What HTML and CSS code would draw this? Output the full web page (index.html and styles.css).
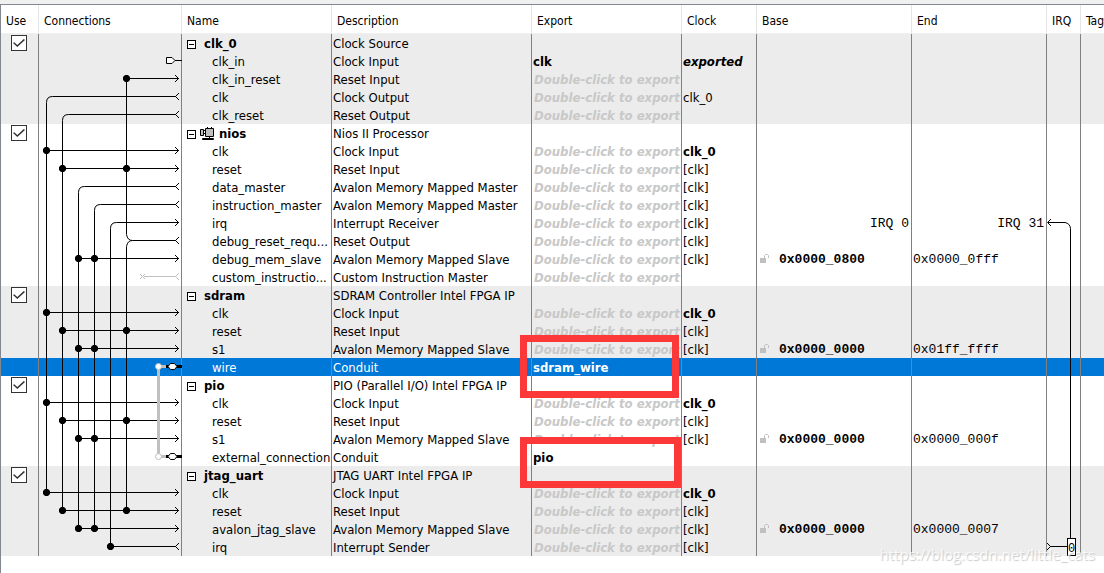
FILE: index.html
```html
<!DOCTYPE html>
<html lang="en">
<head>
<meta charset="utf-8">
<title>System Contents</title>
<link rel="stylesheet" href="styles.css">
</head>
<body>
<svg class="defs" aria-hidden="true">
  <defs>
    <path id="in" d="M-4 -3.500l3.500 3.500l-3.500 3.500" />
    <path id="out" d="M0 -3.500l-3.500 3.500l3.500 3.500" />
    <path id="dot" d="M-1.500 -3.500h3l2 2v3l-2 2h-3l-2 -2v-3z" />
    <path id="hex" d="M-4.500 0l2.500 -3h4l2.500 3l-2.500 3h-4z" />
    <symbol id="lock" viewBox="0 0 9 9"><path d="M0 4h6v5h-6z" fill="#c0c0c0"/><path d="M4.500 4v-2.500l1 -1h2l1 1v2.500" fill="none" stroke="#c0c0c0"/></symbol>
  </defs>
</svg>
<main class="panel">
<table class="grid">
<colgroup><col class="c-use"><col class="c-conn"><col class="c-name"><col class="c-desc"><col class="c-exp"><col class="c-clk"><col class="c-base"><col class="c-end"><col class="c-irq"><col></colgroup>
<thead><tr><th>Use</th><th>Connections</th><th>Name</th><th>Description</th><th>Export</th><th>Clock</th><th>Base</th><th>End</th><th>IRQ</th><th>Tags</th></tr></thead>
<tbody class="shade">
<tr><td><input type="checkbox" class="use" aria-label="Use clk_0" checked></td><td></td><td><div class="mod"><button class="fold" aria-label="Collapse clk_0"></button><b>clk_0</b></div></td><td>Clock Source</td><td></td><td></td><td></td><td></td><td></td><td></td></tr>
<tr><td></td><td></td><td class="port">clk_in</td><td>Clock Input</td><td><b>clk</b></td><td><b><i>exported</i></b></td><td></td><td></td><td></td><td></td></tr>
<tr><td></td><td></td><td class="port">clk_in_reset</td><td>Reset Input</td><td class="hint">Double-click to export</td><td></td><td></td><td></td><td></td><td></td></tr>
<tr><td></td><td></td><td class="port">clk</td><td>Clock Output</td><td class="hint">Double-click to export</td><td>clk_0</td><td></td><td></td><td></td><td></td></tr>
<tr><td></td><td></td><td class="port">clk_reset</td><td>Reset Output</td><td class="hint">Double-click to export</td><td></td><td></td><td></td><td></td><td></td></tr>
</tbody>
<tbody>
<tr><td><input type="checkbox" class="use" aria-label="Use nios" checked></td><td></td><td><div class="mod"><button class="fold" aria-label="Collapse nios"></button><svg class="cpu" viewBox="0 0 15 14" aria-hidden="true"><path d="M.5 2.500h3v6h-3zM5.500 1.500h8v8h-8z" fill="#c0c0c0" stroke="#000"/><path d="M4 3.500h2M4 6.500h2M7.500 0v2M11.500 0v2M9.500 10v2" fill="none" stroke="#000"/><path d="M2.500 11.500h11v1h-11z" fill="#c0c0c0" stroke="#000"/></svg><b>nios</b></div></td><td>Nios II Processor</td><td></td><td></td><td></td><td></td><td></td><td></td></tr>
<tr><td></td><td></td><td class="port">clk</td><td>Clock Input</td><td class="hint">Double-click to export</td><td><b>clk_0</b></td><td></td><td></td><td></td><td></td></tr>
<tr><td></td><td></td><td class="port">reset</td><td>Reset Input</td><td class="hint">Double-click to export</td><td>[clk]</td><td></td><td></td><td></td><td></td></tr>
<tr><td></td><td></td><td class="port">data_master</td><td>Avalon Memory Mapped Master</td><td class="hint">Double-click to export</td><td>[clk]</td><td></td><td></td><td></td><td></td></tr>
<tr><td></td><td></td><td class="port">instruction_master</td><td>Avalon Memory Mapped Master</td><td class="hint">Double-click to export</td><td>[clk]</td><td></td><td></td><td></td><td></td></tr>
<tr><td></td><td></td><td class="port">irq</td><td>Interrupt Receiver</td><td class="hint">Double-click to export</td><td>[clk]</td><td class="mono right">IRQ 0</td><td class="mono right">IRQ 31</td><td></td><td></td></tr>
<tr><td></td><td></td><td class="port">debug_reset_requ...</td><td>Reset Output</td><td class="hint">Double-click to export</td><td>[clk]</td><td></td><td></td><td></td><td></td></tr>
<tr><td></td><td></td><td class="port">debug_mem_slave</td><td>Avalon Memory Mapped Slave</td><td class="hint">Double-click to export</td><td>[clk]</td><td class="mono"><div class="base"><svg class="lock"><use href="#lock"/></svg><b>0x0000_0800</b></div></td><td class="mono">0x0000_0fff</td><td></td><td></td></tr>
<tr><td></td><td></td><td class="port">custom_instructio...</td><td>Custom Instruction Master</td><td class="hint">Double-click to export</td><td></td><td></td><td></td><td></td><td></td></tr>
</tbody>
<tbody class="shade">
<tr><td><input type="checkbox" class="use" aria-label="Use sdram" checked></td><td></td><td><div class="mod"><button class="fold" aria-label="Collapse sdram"></button><b>sdram</b></div></td><td>SDRAM Controller Intel FPGA IP</td><td></td><td></td><td></td><td></td><td></td><td></td></tr>
<tr><td></td><td></td><td class="port">clk</td><td>Clock Input</td><td class="hint">Double-click to export</td><td><b>clk_0</b></td><td></td><td></td><td></td><td></td></tr>
<tr><td></td><td></td><td class="port">reset</td><td>Reset Input</td><td class="hint">Double-click to export</td><td>[clk]</td><td></td><td></td><td></td><td></td></tr>
<tr><td></td><td></td><td class="port">s1</td><td>Avalon Memory Mapped Slave</td><td class="hint">Double-click to export</td><td>[clk]</td><td class="mono"><div class="base"><svg class="lock"><use href="#lock"/></svg><b>0x0000_0000</b></div></td><td class="mono">0x01ff_ffff</td><td></td><td></td></tr>
<tr class="selected"><td></td><td></td><td class="port">wire</td><td>Conduit</td><td><b>sdram_wire</b></td><td></td><td></td><td></td><td></td><td></td></tr>
</tbody>
<tbody>
<tr><td><input type="checkbox" class="use" aria-label="Use pio" checked></td><td></td><td><div class="mod"><button class="fold" aria-label="Collapse pio"></button><b>pio</b></div></td><td>PIO (Parallel I/O) Intel FPGA IP</td><td></td><td></td><td></td><td></td><td></td><td></td></tr>
<tr><td></td><td></td><td class="port">clk</td><td>Clock Input</td><td class="hint">Double-click to export</td><td><b>clk_0</b></td><td></td><td></td><td></td><td></td></tr>
<tr><td></td><td></td><td class="port">reset</td><td>Reset Input</td><td class="hint">Double-click to export</td><td>[clk]</td><td></td><td></td><td></td><td></td></tr>
<tr><td></td><td></td><td class="port">s1</td><td>Avalon Memory Mapped Slave</td><td class="hint">Double-click to export</td><td>[clk]</td><td class="mono"><div class="base"><svg class="lock"><use href="#lock"/></svg><b>0x0000_0000</b></div></td><td class="mono">0x0000_000f</td><td></td><td></td></tr>
<tr><td></td><td></td><td class="port">external_connection</td><td>Conduit</td><td><b>pio</b></td><td></td><td></td><td></td><td></td><td></td></tr>
</tbody>
<tbody class="shade">
<tr><td><input type="checkbox" class="use" aria-label="Use jtag_uart" checked></td><td></td><td><div class="mod"><button class="fold" aria-label="Collapse jtag_uart"></button><b>jtag_uart</b></div></td><td>JTAG UART Intel FPGA IP</td><td></td><td></td><td></td><td></td><td></td><td></td></tr>
<tr><td></td><td></td><td class="port">clk</td><td>Clock Input</td><td class="hint">Double-click to export</td><td><b>clk_0</b></td><td></td><td></td><td></td><td></td></tr>
<tr><td></td><td></td><td class="port">reset</td><td>Reset Input</td><td class="hint">Double-click to export</td><td>[clk]</td><td></td><td></td><td></td><td></td></tr>
<tr><td></td><td></td><td class="port">avalon_jtag_slave</td><td>Avalon Memory Mapped Slave</td><td class="hint">Double-click to export</td><td>[clk]</td><td class="mono"><div class="base"><svg class="lock"><use href="#lock"/></svg><b>0x0000_0000</b></div></td><td class="mono">0x0000_0007</td><td></td><td></td></tr>
<tr><td></td><td></td><td class="port">irq</td><td>Interrupt Sender</td><td class="hint">Double-click to export</td><td>[clk]</td><td></td><td></td><td></td><td></td></tr>
</tbody>
</table>

<svg class="wires" viewBox="38 34 146 522" aria-hidden="true">
  <g class="line">
    <path d="M176 96.500H52.500q-6 0 -6 6V492.500H179"/>
    <path d="M176 114.500H68.500q-6 0 -6 6V510.500H179"/>
    <path d="M176 186.500H84.500q-6 0 -6 6V528.500H179"/>
    <path d="M176 204.500H100.500q-6 0 -6 6V528.500"/>
    <path d="M179 222.500H116.500q-6 0 -6 6V546.500H176"/>
    <path d="M179 78.500H126.500V234.500q1 6 6 6H176M132.500 240.500q-5 0 -6 6V510.500"/>
    <path d="M46.500 150.500H179M62.500 168.500H179M78.500 258.500H179"/>
    <path d="M46.500 312.500H179M62.500 330.500H179M78.500 348.500H179"/>
    <path d="M46.500 402.500H179M62.500 420.500H179M78.500 438.500H179"/>
    <path d="M166.500 57.500h5.500l3 3l-3 3h-5.500zM175 60.500h7" class="open"/>
    <use href="#in" x="179" y="78.500"/><use href="#in" x="179" y="150.500"/><use href="#in" x="179" y="168.500"/>
    <use href="#in" x="179" y="222.500"/><use href="#in" x="179" y="258.500"/><use href="#in" x="179" y="312.500"/>
    <use href="#in" x="179" y="330.500"/><use href="#in" x="179" y="348.500"/><use href="#in" x="179" y="402.500"/>
    <use href="#in" x="179" y="420.500"/><use href="#in" x="179" y="438.500"/><use href="#in" x="179" y="492.500"/>
    <use href="#in" x="179" y="510.500"/><use href="#in" x="179" y="528.500"/>
    <use href="#out" x="179" y="96.500"/><use href="#out" x="179" y="114.500"/><use href="#out" x="179" y="186.500"/>
    <use href="#out" x="179" y="204.500"/><use href="#out" x="179" y="240.500"/><use href="#out" x="179" y="546.500"/>
  </g>
  <g class="dots">
    <use href="#dot" x="126.500" y="78.500"/><use href="#dot" x="46.500" y="150.500"/>
    <use href="#dot" x="62.500" y="168.500"/><use href="#dot" x="126.500" y="168.500"/>
    <use href="#dot" x="78.500" y="258.500"/><use href="#dot" x="94.500" y="258.500"/>
    <use href="#dot" x="46.500" y="312.500"/><use href="#dot" x="62.500" y="330.500"/><use href="#dot" x="126.500" y="330.500"/>
    <use href="#dot" x="78.500" y="348.500"/><use href="#dot" x="94.500" y="348.500"/>
    <use href="#dot" x="46.500" y="402.500"/><use href="#dot" x="62.500" y="420.500"/><use href="#dot" x="126.500" y="420.500"/>
    <use href="#dot" x="78.500" y="438.500"/><use href="#dot" x="94.500" y="438.500"/>
    <use href="#dot" x="46.500" y="492.500"/><use href="#dot" x="62.500" y="510.500"/><use href="#dot" x="126.500" y="510.500"/>
    <use href="#dot" x="78.500" y="528.500"/><use href="#dot" x="94.500" y="528.500"/><use href="#dot" x="110.500" y="546.500"/>
  </g>
  <g class="faint">
    <path d="M140 274l5 5M145 274l-5 5M144 276.500H176"/>
    <use href="#out" x="179" y="276.500"/>
    <path d="M166 366.500H158.500V456.500H166" class="thick"/>
    <circle cx="158.500" cy="366.500" r="3" class="joint"/>
    <circle cx="158.500" cy="456.500" r="3" class="joint"/>
  </g>
  <g class="conduit">
    <path d="M166 366.500H182M166 456.500H182"/>
    <use href="#hex" x="172.500" y="366.500"/><use href="#hex" x="172.500" y="456.500"/>
  </g>
</svg>

<svg class="irq-wire" viewBox="1046 34 34 522" aria-hidden="true">
  <g class="line">
    <path d="M1048 222.500H1065q5 1 5.500 6V538M1050 546.500H1067"/>
    <path d="M1051 219l-3.500 3.500l3.500 3.500M1047 543l3.500 3.500l-3.500 3.500"/>
    <rect x="1067.500" y="538.500" width="8" height="17" fill="#fff"/>
  </g>
  <text x="1071.500" y="552" class="irq-num">0</text>
</svg>
<div class="mark mark-wire"></div>
<div class="mark mark-pio"></div>
<div class="watermark">https://blog.csdn.net/little_cats</div>
</main>
</body>
</html>
```

FILE: styles.css
```css
* { box-sizing: border-box; }
body {
  margin: 0;
  padding-top: 4px;
  background: #f0f0f0;
  color: #000;
  font: 13px/16px "DejaVu Sans Condensed", "DejaVu Sans", sans-serif;
}
.defs { position: absolute; width: 0; height: 0; }
.panel {
  position: relative;
  min-height: calc(100vh - 4px);
  overflow: hidden;
  border-top: 1px solid #828790;
  border-left: 1px solid #828790;
  background: #fff;
}
.grid { width: 100%; table-layout: fixed; border-collapse: separate; border-spacing: 0; }
.c-use { width: 37px; }
.c-conn { width: 143px; }
.c-name, .c-exp { width: 150px; }
.c-desc { width: 200px; }
.c-clk { width: 75px; }
.c-base { width: 155px; }
.c-end { width: 135px; }
.c-irq { width: 34px; }
th {
  height: 29px;
  padding: 4px 0 0 5px;
  border-left: 1px solid #e5e5e5;
  border-bottom: 1px solid #f0f0f0;
  font-weight: normal;
  font-size: 12px;
  text-align: left;
  white-space: nowrap;
  overflow: hidden;
}
td {
  height: 18px;
  padding: 2px 0 0 1px;
  border-left: 1px solid #808080;
  white-space: nowrap;
  overflow: hidden;
}
th:first-child, td:first-child { border-left: 0; }
td:first-child { padding-top: 0; vertical-align: top; }
.shade { background: #ececec; }
.selected { background: #0078d7; color: #fff; }
.port { padding-left: 30px; }
.hint { padding-left: 2px; color: #c8c8c8; font-weight: bold; font-style: italic; }
.mono { font-family: "Liberation Mono", monospace; }
.right { padding-right: 2px; text-align: right; }
.mod { display: flex; align-items: center; gap: 4px; padding-left: 4px; height: 16px; }
.fold {
  position: relative;
  width: 9px;
  height: 9px;
  margin-right: 4px;
  padding: 0;
  border: 1px solid #000;
  background: #fff;
}
.fold + svg { margin-left: -4px; }
.fold::after { content: ""; position: absolute; left: 1px; top: 3px; width: 5px; height: 1px; background: #000; }
.cpu { width: 15px; height: 14px; }
.use {
  appearance: none;
  display: block;
  position: relative;
  width: 16px;
  height: 16px;
  margin: 1px 0 0 9px;
  border: 1px solid #333;
  background: #fff;
}
.use:checked::after {
  content: "";
  position: absolute;
  inset: 2px 1px;
  background: #333;
  clip-path: polygon(0 50%, 10% 42%, 36% 70%, 90% 10%, 100% 20%, 36% 90%);
}
.base { display: flex; align-items: center; gap: 10px; padding-left: 2px; height: 16px; }
.lock { width: 9px; height: 9px; margin-bottom: 4px; }
.wires, .irq-wire { position: absolute; top: 29px; height: 522px; pointer-events: none; }
.wires { left: 37px; width: 146px; }
.irq-wire { left: 1045px; width: 34px; }
.line { fill: none; stroke: #000; stroke-width: 1; }
.line .open { fill: #fff; }
.dots { fill: #000; }
.faint { fill: none; stroke: #c0c0c0; }
.faint .thick { stroke-width: 3; }
.faint .joint { fill: #fff; stroke-width: 1; }
.conduit { fill: #fff; stroke: #000; }
.conduit path { stroke-width: 3; }
.conduit use { stroke-width: 1; }
.irq-num { font: 12px "Liberation Mono", monospace; text-anchor: middle; }
.mark { position: absolute; left: 519px; border: 7px solid #fc3838; }
.mark-wire { top: 330px; width: 159px; height: 63px; }
.mark-pio { top: 432px; width: 161px; height: 51px; }
.watermark {
  position: absolute;
  right: 9px;
  top: 539px;
  color: #ffffffcc;
  font: 15px/20px "Open Sans", sans-serif;
  text-shadow: 1px 1px 1px #c8c8c8;
}
```
